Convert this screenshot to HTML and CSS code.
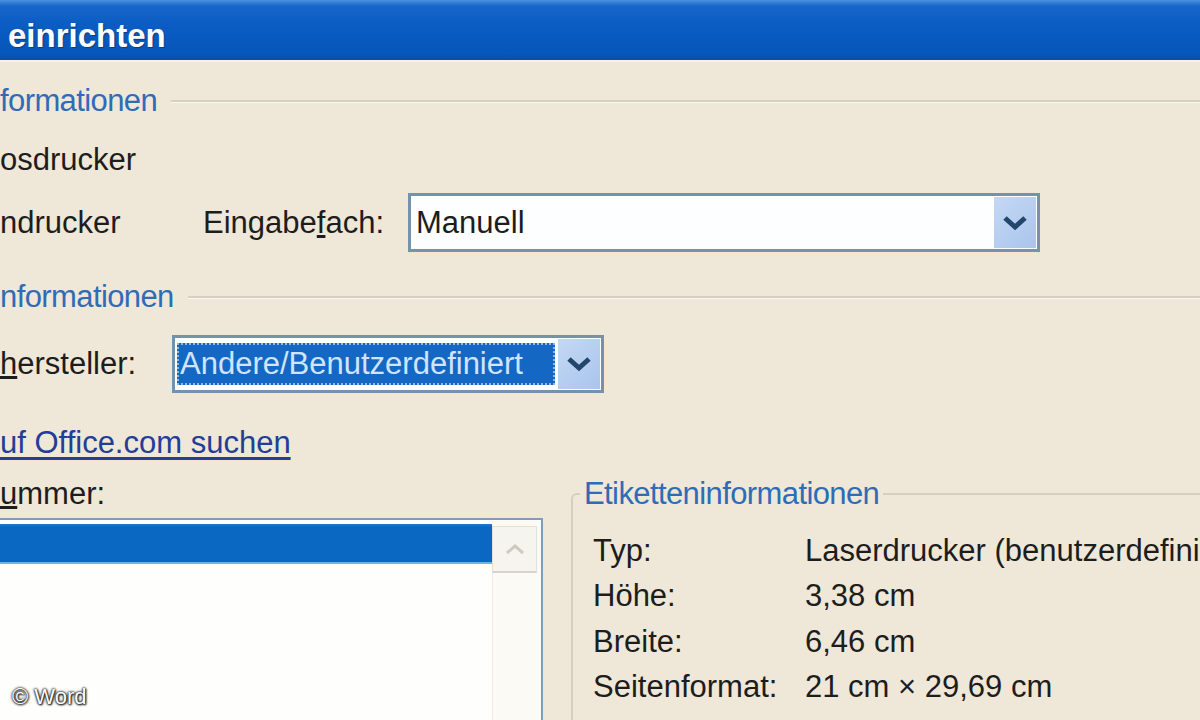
FILE: index.html
```html
<!DOCTYPE html>
<html lang="de">
<head>
    <meta charset="UTF-8">
    <meta name="viewport" content="width=device-width, initial-scale=1.0">
    <title>Etiketten einrichten</title>
    <link rel="stylesheet" href="styles.css">
</head>
<body>
    <div class="window">
        <div class="titlebar">
            <span class="title">einrichten</span>
        </div>

        <div class="dialog">
            <div class="group-head first">
                <span class="group-title">formationen</span>
                <span class="rule"></span>
            </div>
            <div class="row plain">
                <span class="label">osdrucker</span>
            </div>
            <div class="row tray-row">
                <span class="label tray-a">ndrucker</span>
                <label class="label tray-b" for="tray">Eingabe<u>f</u>ach:</label>
                <div class="combo combo-tray" id="tray">
                    <span class="combo-value">Manuell</span>
                    <span class="combo-btn">
                        <svg width="26" height="16" viewBox="0 0 26 16"><path d="M3 3 L13 12 L23 3" fill="none" stroke="#23466c" stroke-width="5"/></svg>
                    </span>
                </div>
            </div>

            <div class="group-head second">
                <span class="group-title">nformationen</span>
                <span class="rule"></span>
            </div>
            <div class="row vendor-row">
                <label class="label vendor-a" for="vendor"><u>h</u>ersteller:</label>
                <div class="combo combo-vendor" id="vendor">
                    <span class="combo-value selected"><span class="focus">Andere/Benutzerdefiniert</span></span>
                    <span class="combo-btn">
                        <svg width="26" height="16" viewBox="0 0 26 16"><path d="M3 3 L13 12 L23 3" fill="none" stroke="#23466c" stroke-width="5"/></svg>
                    </span>
                </div>
            </div>
            <div class="row link-row">
                <a class="office-link" href="#">uf Office.com suchen</a>
            </div>

            <div class="bottom">
                <div class="list-col">
                    <div class="list-label"><u>u</u>mmer:</div>
                    <div class="listbox">
                        <div class="list-items">
                            <div class="list-item selected"></div>
                        </div>
                        <div class="scrollbar">
                            <span class="scroll-btn up">
                                <svg width="22" height="12" viewBox="0 0 22 12"><path d="M3 10 L11 3 L19 10" fill="none" stroke="#cfcac0" stroke-width="3"/></svg>
                            </span>
                            <span class="scroll-track"></span>
                            <span class="scroll-btn down"></span>
                        </div>
                    </div>
                </div>

                <fieldset class="info-box">
                    <legend>Etiketteninformationen</legend>
                    <div class="info-row"><span class="info-label">Typ:</span><span class="info-value">Laserdrucker (benutzerdefiniert)</span></div>
                    <div class="info-row"><span class="info-label">Höhe:</span><span class="info-value">3,38 cm</span></div>
                    <div class="info-row"><span class="info-label">Breite:</span><span class="info-value">6,46 cm</span></div>
                    <div class="info-row"><span class="info-label">Seitenformat:</span><span class="info-value">21 cm × 29,69 cm</span></div>
                </fieldset>
            </div>
        </div>

        <div class="watermark">© Word</div>
    </div>
</body>
</html>
```

FILE: styles.css
```css
body {
    margin: 0;
    background-color: #efe7d7;
    font-family: "Liberation Sans", Arial, sans-serif;
    font-size: 31px;
    color: #1d1d1d;
}

.window {
    position: relative;
    width: 1200px;
    height: 720px;
    overflow: hidden;
}

.titlebar {
    height: 62px;
    display: flex;
    align-items: center;
    padding: 12px 0 0 8px;
    background: linear-gradient(#4a92dd 0, #1767cb 6px, #0b5cc3 40%, #0656bb 90%, #0a4ea8 100%);
    border-bottom: 2px solid #f6f1e4;
    box-sizing: border-box;
}

.title {
    color: #fff;
    font-weight: bold;
    font-size: 33px;
    text-shadow: 1px 1px 1px #0a3c80;
}

.group-head {
    display: flex;
    align-items: center;
    height: 42px;
}

.group-head.first {
    margin-top: 18px;
}

.group-head.second {
    margin-top: 24px;
}

.group-title {
    color: #2f6cb8;
    white-space: nowrap;
    letter-spacing: -0.6px;
}

.rule {
    flex: 1;
    height: 0;
    margin-left: 14px;
    border-top: 2px solid #d7cfbf;
    border-bottom: 1px solid #fbf8f0;
}

.row {
    display: flex;
    align-items: center;
    white-space: nowrap;
}

.plain {
    margin-top: 18px;
    height: 40px;
}

.tray-row {
    margin-top: 13px;
    height: 59px;
}

.tray-a {
    width: 203px;
}

.tray-b {
    width: 205px;
}

.vendor-row {
    margin-top: 17px;
    height: 58px;
}

.vendor-a {
    width: 172px;
}

.combo {
    display: flex;
    align-items: stretch;
    height: 100%;
    box-sizing: border-box;
    border: 3px solid #7592ad;
    background-color: #fdfeff;
    padding: 1px;
}

.combo-tray {
    width: 632px;
}

.combo-vendor {
    width: 432px;
}

.combo-value {
    flex: 1;
    display: flex;
    align-items: center;
    padding-left: 4px;
}

.combo-value.selected {
    padding: 4px 0 4px 1px;
}

.focus {
    display: flex;
    align-items: center;
    height: 100%;
    width: 100%;
    box-sizing: border-box;
    padding-left: 3px;
    background-color: #1468c4;
    color: #cfe4ff;
    outline: 2px dotted #8fb6e4;
    outline-offset: -2px;
}

.combo-btn {
    width: 42px;
    margin-left: 3px;
    display: flex;
    align-items: center;
    justify-content: center;
    background: linear-gradient(135deg, #c4d8f4, #a9c5ec);
}

.link-row {
    margin-top: 31px;
    height: 38px;
}

.office-link {
    color: #223e96;
    text-decoration: underline;
    text-underline-offset: 4px;
}

.bottom {
    display: flex;
    align-items: flex-start;
}

.list-col {
    flex-shrink: 0;
    width: 547px;
    margin-left: -4px;
}

.list-label {
    margin-top: 14px;
    height: 36px;
    line-height: 36px;
    padding-left: 4px;
}

.listbox {
    margin-top: 6px;
    height: 230px;
    display: flex;
    border: 2px solid #7f9db9;
    background-color: #fefefc;
}

.list-items {
    flex: 1;
    padding-top: 4px;
}

.list-item.selected {
    height: 38px;
    background: linear-gradient(#1c7ad0 0, #0a68c2 3px, #0a68c2 100%);
    border-bottom: 2px solid #6fb2e6;
}

.scrollbar {
    width: 45px;
    display: flex;
    flex-direction: column;
    padding: 6px 4px 0 0;
    background-color: #fbfaf5;
}

.scroll-btn {
    height: 44px;
    display: flex;
    align-items: center;
    justify-content: center;
    background-color: #f6f4ee;
    border: 1px solid #e4e0d6;
    border-bottom: 2px solid #d8d4ca;
}

.scroll-track {
    flex: 1;
    border-left: 1px solid #efece4;
}

.scroll-btn.down {
    height: 20px;
    border-bottom: none;
}

.info-box {
    flex: 1;
    min-width: 0;
    margin: 14px 0 0 28px;
    padding: 16px 0 0 20px;
    border: 2px solid #d6cebe;
    border-right: none;
    border-bottom: none;
    border-radius: 6px 0 0 0;
    height: 300px;
    white-space: nowrap;
}

.info-box legend {
    margin-left: -13px;
    padding: 0 4px;
    color: #2f6cb8;
    line-height: 36px;
    letter-spacing: -0.6px;
}

.info-row {
    display: flex;
    align-items: center;
    height: 45.5px;
}

.info-label {
    flex-shrink: 0;
    width: 212px;
}

.watermark {
    position: absolute;
    left: 12px;
    bottom: 10px;
    font-size: 22px;
    color: #fff;
    text-shadow: 0 0 3px #000, 0 0 2px #000, 1px 1px 2px #333;
}
```
